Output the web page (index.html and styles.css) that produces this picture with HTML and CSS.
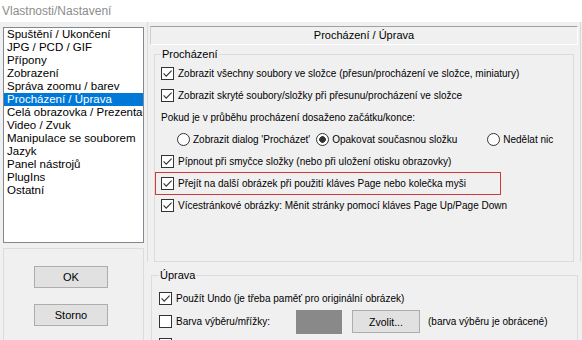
FILE: index.html
```html
<!DOCTYPE html>
<html lang="cs">
<head>
<meta charset="utf-8">
<title>Vlastnosti/Nastavení</title>
<link rel="stylesheet" href="styles.css">
</head>
<body>
<div class="window">
  <div class="titlebar">Vlastnosti/Nastavení</div>
  <div class="dialog">
    <div class="left">
      <ul class="list">
        <li>Spuštění / Ukončení</li>
        <li>JPG / PCD / GIF</li>
        <li>Přípony</li>
        <li>Zobrazení</li>
        <li>Správa zoomu / barev</li>
        <li class="selected">Procházení / Úprava</li>
        <li>Celá obrazovka / Prezentace</li>
        <li>Video / Zvuk</li>
        <li>Manipulace se souborem</li>
        <li>Jazyk</li>
        <li>Panel nástrojů</li>
        <li>PlugIns</li>
        <li>Ostatní</li>
      </ul>
      <div class="actions">
        <button class="btn">OK</button>
        <button class="btn">Storno</button>
      </div>
    </div>
    <div class="right">
      <div class="page">
        <div class="page-title">Procházení / Úprava</div>
        <fieldset class="group group-browse">
          <legend>Procházení</legend>
          <div class="row"><span class="cb"><svg viewBox="0 0 11 11" width="11" height="11"><path d="M1.6 5.4 4.2 8.1 9.6 2.6" fill="none" stroke="#333" stroke-width="1.1"/></svg></span>Zobrazit všechny soubory ve složce (přesun/procházení ve složce, miniatury)</div>
          <div class="row"><span class="cb"><svg viewBox="0 0 11 11" width="11" height="11"><path d="M1.6 5.4 4.2 8.1 9.6 2.6" fill="none" stroke="#333" stroke-width="1.1"/></svg></span>Zobrazit skryté soubory/složky při přesunu/procházení ve složce</div>
          <div class="row text-row">Pokud je v průběhu procházení dosaženo začátku/konce:</div>
          <div class="row radios">
            <span class="radio-item r1"><span class="rb"></span>Zobrazit dialog 'Procházet'</span>
            <span class="radio-item r2"><span class="rb on"></span>Opakovat současnou složku</span>
            <span class="radio-item"><span class="rb"></span>Nedělat nic</span>
          </div>
          <div class="row"><span class="cb"><svg viewBox="0 0 11 11" width="11" height="11"><path d="M1.6 5.4 4.2 8.1 9.6 2.6" fill="none" stroke="#333" stroke-width="1.1"/></svg></span>Pípnout při smyčce složky (nebo při uložení otisku obrazovky)</div>
          <div class="row marked"><span class="cb"><svg viewBox="0 0 11 11" width="11" height="11"><path d="M1.6 5.4 4.2 8.1 9.6 2.6" fill="none" stroke="#333" stroke-width="1.1"/></svg></span>Přejít na další obrázek při použití kláves Page nebo kolečka myši</div>
          <div class="row"><span class="cb"><svg viewBox="0 0 11 11" width="11" height="11"><path d="M1.6 5.4 4.2 8.1 9.6 2.6" fill="none" stroke="#333" stroke-width="1.1"/></svg></span>Vícestránkové obrázky: Měnit stránky pomocí kláves Page Up/Page Down</div>
        </fieldset>
      </div>
      <fieldset class="group group-edit">
        <legend>Úprava</legend>
        <div class="row"><span class="cb"><svg viewBox="0 0 11 11" width="11" height="11"><path d="M1.6 5.4 4.2 8.1 9.6 2.6" fill="none" stroke="#333" stroke-width="1.1"/></svg></span>Použít Undo (je třeba paměť pro originální obrázek)</div>
        <div class="row"><span class="cb"></span><span class="color-label">Barva výběru/mřížky:</span><span class="swatch"></span><button class="btn btn-pick">Zvolit...</button><span class="note">(barva výběru je obrácené)</span></div>
        <div class="row"><span class="cb"></span>Invertovat barvu mřížky při výběru oblasti</div>
      </fieldset>
    </div>
  </div>
</div>
</body>
</html>
```

FILE: styles.css
```css
* { box-sizing: border-box; }

html, body {
  margin: 0;
  padding: 0;
}

body {
  width: 582px;
  height: 340px;
  overflow: hidden;
  background: #f0f0f0;
  font-family: "Liberation Sans", Arial, sans-serif;
  font-size: 10px;
  color: #000;
}

.window {
  width: 582px;
  height: 340px;
  display: flex;
  flex-direction: column;
}

.titlebar {
  height: 23px;
  background: #ffffff;
  color: #8c8c8c;
  font-size: 12px;
  line-height: 22px;
  padding-left: 2px;
}

.dialog {
  display: flex;
  padding-left: 3px;
  flex: 1;
}

.left {
  width: 141px;
  display: flex;
  flex-direction: column;
  padding-top: 5px;
  gap: 5px;
}

.list {
  list-style: none;
  margin: 0;
  padding: 0;
  height: 216px;
  background: #fff;
  border: 1px solid #828790;
  font-size: 11.5px;
  overflow: hidden;
}

.list li {
  height: 13px;
  line-height: 13px;
  padding-left: 3px;
  white-space: nowrap;
  overflow: hidden;
}

.list li.selected {
  background: #0078d7;
  color: #fff;
}

.actions {
  height: 100px;
  border: 1px solid #dcdcdc;
  display: flex;
  flex-direction: column;
  align-items: flex-start;
  padding: 17px 0 0 30px;
  gap: 16px;
}

.btn {
  font-family: "Liberation Sans", Arial, sans-serif;
  font-size: 11px;
  color: #000;
  background: #e1e1e1;
  border: 1px solid #adadad;
  width: 74px;
  height: 22px;
  padding: 0;
  margin: 0;
}

.right {
  width: 434px;
  margin-left: 3px;
  display: flex;
  flex-direction: column;
}

.page {
  height: 240px;
  border-left: 1px solid #dadada;
  border-right: 1px solid #dadada;
  padding: 4px 2px 0 2px;
  display: flex;
  flex-direction: column;
}

.page-title {
  height: 19px;
  border-top: 1px solid #a0a0a0;
  border-left: 1px solid #cfcfcf;
  border-bottom: 1px solid #ffffff;
  border-right: 1px solid #ffffff;
  text-align: center;
  line-height: 16px;
  font-size: 11px;
}

.group {
  margin: 0;
  min-width: 0;
  border: 1px solid #dcdcdc;
}

.group legend {
  padding: 0 1px;
  line-height: 13px;
  font-size: 11px;
}

.group-browse {
  flex: 1;
  margin: 3px 4px 0 4px;
  padding: 1px 4px 0 6px;
}

.group-edit {
  margin: 7px 3px 0 4px;
  padding: 5px 4px 0 7px;
  height: 120px;
}

.row {
  height: 22px;
  display: flex;
  align-items: center;
  white-space: nowrap;
}

.group-browse .row:nth-child(n+7) {
  height: 22.5px;
}

.group-edit .row {
  height: 23px;
}

.cb {
  width: 13px;
  height: 13px;
  flex: none;
  border: 1px solid #333;
  background: #fff;
  margin-right: 4px;
  display: flex;
}

.cb svg {
  display: block;
}

.radios {
  padding-left: 16px;
}

.radio-item {
  display: flex;
  align-items: center;
  flex: none;
}

.r1 { margin-right: 6px; }
.r2 { width: 171px; }

.rb {
  width: 13px;
  height: 13px;
  flex: none;
  border: 1px solid #333;
  border-radius: 50%;
  background: #fff;
  margin-right: 3px;
}

.rb.on {
  background: radial-gradient(circle at center, #333 0 3px, #fff 3.6px);
}

.marked {
  border: 1px solid #d0393b;
  margin-left: -6px;
  padding-left: 5px;
  width: 346px;
}

.color-label {
  width: 120px;
}

.swatch {
  width: 46px;
  height: 24px;
  background: #898989;
}

.btn-pick {
  width: 68px;
  height: 23px;
  margin-left: 10px;
  font-size: 10.5px;
}

.note {
  margin-left: 8px;
}
```
